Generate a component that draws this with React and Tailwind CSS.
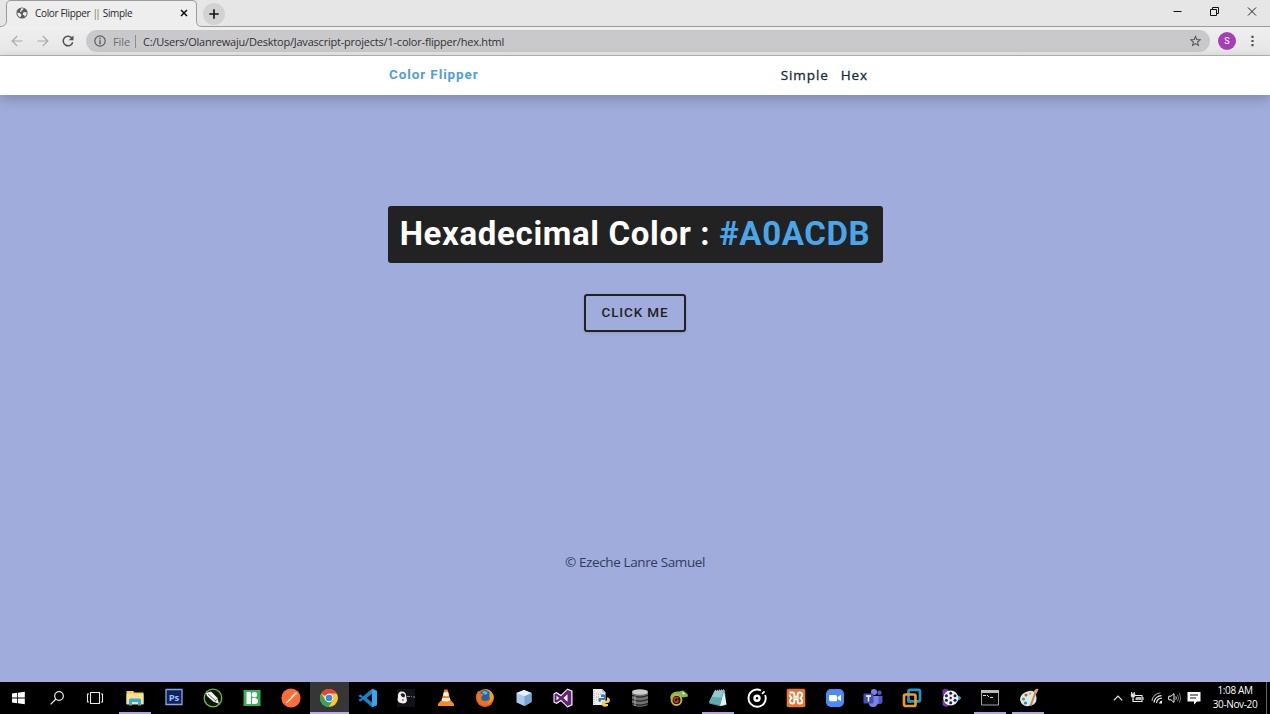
import React from "react";

const S = ({ children, w = 20, h = 20, className = "", vb }) => (
  <svg width={w} height={h} viewBox={vb || `0 0 ${w} ${h}`} fill="none" className={"block shrink-0 " + className}>
    {children}
  </svg>
);

function TabStrip() {
  return (
    <div className="flex h-[27px] shrink-0 items-stretch bg-[#e6e6e6]">
      <svg width="205" height="27" viewBox="0 0 205 27" fill="none" className="absolute left-0 top-0">
        <path d="M0 26.5C4 26.5 6.5 24.500 6.500 21V5Q6.500 0.500 11 0.500H192Q196.500 0.500 196.500 5V21Q196.500 26.500 202 26.500H205V27H0Z" fill="#eeeeee" />
        <path d="M0 26.500C4 26.500 6.500 24.500 6.500 21V5Q6.500 0.500 11 0.500H192Q196.500 0.500 196.500 5V21Q196.500 26.500 202 26.500H205" stroke="#9b9b9b" />
      </svg>
      <div className="relative flex w-[196px] items-center pb-px pl-4">
        <S w={12} h={12} vb="0 0 12 12">
          <circle cx="6" cy="6" r="5.600" fill="#58595c" />
          <path d="M1.300 5.600L3.600 5.900L5.200 7.300L5.400 8.500L4.600 9.300V10.600C2.500 9.900 1.300 8.200 1.300 5.600ZM5.200 1.300L7.600 1.400L7 3L5.600 3.600L5.200 5L3.900 4.700ZM7 5.800L8.400 5.100L10.800 5.600C10.700 7.700 9.700 9.200 8.600 9.800L8.200 8.200L6.800 7.700Z" fill="#eee" />
        </S>
        <span className="ml-[7px] flex whitespace-pre font-['Open_Sans',sans-serif] text-[10px] leading-none tracking-[-0.34px] text-[#27282b]">
          Color Flipper <span className="tracking-[-2.8px] text-[#77743f]">||</span><span className="ml-[2.600px]"> Simple</span>
        </span>
        <S w={8} h={8} className="ml-auto mr-2"><path d="M1 1L7 7M7 1L1 7" stroke="#111" strokeWidth="1.500" /></S>
      </div>
      <div className="relative ml-[7px] mt-[3px] flex h-[22px] w-[22px] items-center justify-center rounded-full bg-[#d2d2d2]">
        <S w={10} h={10}><path d="M5 0.300V9.700M0.300 5H9.700" stroke="#111" strokeWidth="1.600" /></S>
      </div>
      <div className="-ml-[20px] flex flex-1 justify-end border-b border-[#9b9b9b]">
        <div className="flex items-start gap-[28px] pr-[13px] pt-[6px]">
          <S w={9} h={11}><path d="M0.500 5.500H8.500" stroke="#111" /></S>
          <S w={9} h={11}><path d="M0.500 3.500H6.500V9.500H0.500ZM2.500 3.500V1.500H8.500V7.500H6.500" stroke="#111" /></S>
          <S w={10} h={11}><path d="M1 1.500L9 9.500M9 1.500L1 9.500" stroke="#222" /></S>
        </div>
      </div>
    </div>
  );
}

function Toolbar() {
  return (
    <div className="flex h-[29px] shrink-0 items-center border-b border-[#b4b4b4] bg-gradient-to-b from-[#efefef] to-[#e6e6e6] pl-[11px]">
      <S w={12} h={12}><path d="M11.500 6H1.500M6.200 1L1.200 6L6.200 11" stroke="#aaa" strokeWidth="1.200" /></S>
      <S w={12} h={12} className="ml-[14px]"><path d="M0.500 6H10.500M5.800 1L10.800 6L5.800 11" stroke="#aaa" strokeWidth="1.200" /></S>
      <S w={12} h={12} className="ml-[13px]">
        <path d="M10 3.300A4.800 4.800 0 1 0 10.700 7.200" stroke="#505256" strokeWidth="1.500" />
        <path d="M11.500 0.500V5.300H6.700Z" fill="#505256" />
      </S>
      <div className="ml-3 flex h-[22px] w-[1124px] items-center rounded-full bg-[#c9c9cb] pl-2 pr-[9px] font-['Open_Sans',sans-serif] text-[11px] leading-none">
        <S w={12} h={12}>
          <circle cx="6" cy="6" r="5.200" stroke="#5a5c60" strokeWidth="1.200" />
          <path d="M6 2.700V4.200M6 5.200V9.200" stroke="#505256" strokeWidth="1.300" />
        </S>
        <span className="ml-[7px] w-[17px] whitespace-nowrap tracking-[-0.1px] text-[#6a6c70]">File</span>
        <span className="ml-[5px] h-[13px] w-px bg-[#8b8c8f]" />
        <span className="ml-[7px] whitespace-nowrap tracking-[-0.21px] text-[#303134]">C:/Users/Olanrewaju/Desktop/Javascript-projects/1-color-flipper/hex.html</span>
        <S w={11} h={12} vb="0 0 12 12" className="ml-auto">
          <path d="M6 1L7.400 4.400L11.200 4.700L8.300 7.100L9.200 10.800L6 8.800L2.800 10.800L3.700 7.100L0.800 4.700L4.600 4.400Z" stroke="#505256" strokeWidth="1.100" />
        </S>
      </div>
      <div className="ml-2 flex h-[18px] w-[18px] items-center justify-center rounded-full bg-[#a63fb6] font-['Roboto',sans-serif] text-[9px] leading-none text-white">S</div>
      <S w={3} h={12} className="ml-[15px]"><path d="M0.400 0.800h2.200v2.200H0.400ZM0.400 4.900h2.200v2.200H0.400ZM0.400 9h2.200v2.200H0.400Z" fill="#505256" /></S>
    </div>
  );
}

const icons = [
  <S>
    <path d="M3 5.600L8.200 4.800V9.600H3ZM9 4.700L15.800 3.700V9.600H9ZM3 10.400H8.200V15.200L3 14.400ZM9 10.400H15.800V16.300L9 15.300Z" fill="#fff" />
  </S>,
  <S>
    <circle cx="12" cy="8" r="4.300" stroke="#eee" strokeWidth="1.200" /><path d="M9 11L3.500 16.400" stroke="#eee" strokeWidth="1.300" />
  </S>,
  <S className="-ml-[2px]">
    <path d="M5.500 4.500H14.500V15.500H5.500ZM4 6H2.500V14H4M16 6H17.500V14H16" stroke="#e8e8e8" strokeWidth="1.100" />
  </S>,
  <S className="-ml-[1px]">
    <path d="M1.500 3H8L9.500 4.500H18.500V16H1.500Z" fill="#f3cf68" /><path d="M1.500 6H18.500V16.500H1.500Z" fill="#fbe08c" />
    <path d="M4 17.500V12Q4 10.500 5.500 10.500H14.500Q16 10.500 16 12V17.500H13V14H7V17.500Z" fill="#31aee0" />
  </S>,
  <S className="-ml-[1px]">
    <path d="M2 1.500H18V16.500H2Z" fill="#12205e" stroke="#7fa9e8" strokeWidth="1.300" />
    <text x="10" y="12.800" textAnchor="middle" fontFamily="Open Sans, sans-serif" fontWeight="700" fontSize="9.500" fill="#9cc7fb">Ps</text>
  </S>,
  <S>
    <circle cx="10" cy="10" r="8.800" fill="#0c1608" stroke="#75b83a" strokeWidth="1.300" />
    <path d="M3 5L8 3.500L14.500 10L16 15.700L10.500 13.800L4 8Z" fill="#f2f2f2" /><path d="M5 6L13 13M12 13.500L14.700 10.700" stroke="#444" strokeWidth="0.800" />
  </S>,
  <S>
    <path d="M1.500 2H18.500V18H1.500Z" fill="#35b354" /><path d="M4.500 4H9V16H4.500Z" fill="#fff" />
    <circle cx="12.400" cy="6.800" r="2.700" fill="#fff" /><path d="M10 10H13Q16 10.500 16 13.200T13 16H10Z" fill="#fff" />
  </S>,
  <S>
    <circle cx="10" cy="10" r="9.600" fill="#ff6c37" /><path d="M4.500 15L10.500 9L11.500 10L6 15Z" fill="#fff" /><path d="M10.500 9.800L14.200 5.800" stroke="#fff" strokeWidth="1.500" /><circle cx="14.500" cy="5.500" r="1.300" fill="#ffd5c5" />
  </S>,
  <S>
    <circle cx="10" cy="10" r="9" fill="#fbc92e" />
    <path d="M10 10L2.200 5.500A9 9 0 0 1 17.800 5.500H10Z" fill="#e54335" />
    <path d="M2.200 5.500A9 9 0 0 0 9.800 19L13.700 12L10 14L6.200 12.200Z" fill="#34a353" />
    <circle cx="10" cy="10" r="4.200" fill="#fff" /><circle cx="10" cy="10" r="3.300" fill="#4384f0" />
  </S>,
  <S>
    <path d="M14 0.700L19 3V17L14 19.300L5 11.500L2.500 13.500L0.800 12.600V11.500L4 10L0.800 8.500V7.400L2.500 6.500L5 8.500ZM14 5.700L8.500 10L14 14.300Z" fill="#1585cf" fillRule="evenodd" />
    <path d="M14 0.700L19 3V17L14 19.300Z" fill="#36a6ed" />
  </S>,
  <S className="-ml-[2px]">
    <path d="M1 1H19V19H1Z" fill="#101218" /><path d="M2 9Q1.500 4 5 3.500Q9.500 3 10 7L11 13Q10 15.500 7 15.500Q2 15 1.500 12Z" fill="#eee" />
    <path d="M4.500 6.500Q7 4 9 7L8.300 9.500L6 8.800Z" fill="#16181c" /><circle cx="7" cy="12" r="0.900" fill="#c44" /><path d="M11 8.500H14M15 8.700H16M17 9H19" stroke="#888" />
  </S>,
  <S>
    <path d="M4.500 13H15.500L18 16V18H2V16Z" fill="#f68b1e" /><path d="M8.500 1.500H11.500L15 14Q10 17 5 14Z" fill="#f58a1c" />
    <path d="M7.900 4.200H12.200L13 7.500Q10 8.800 7 7.500ZM6.300 10L13.800 10L14.500 12.500Q10 14.700 5.500 12.500Z" fill="#f2eee8" />
  </S>,
  <S>
    <circle cx="10" cy="10" r="9" fill="#e8661b" /><circle cx="10.500" cy="8.500" r="6.500" fill="#1c65a8" />
    <path d="M10 1C15 1 18.500 5 18.500 10Q16 16 11 16Q14 14 15 11Q14 8 14.500 4Z" fill="#f59d26" />
    <path d="M1.300 7Q2.500 3 4.500 3L5 5.500Q7 5 8.500 6.500L6.500 8.500Q5.500 12.500 9.500 13Q13 13 15 11Q14 16.500 9 17.500Q2 16 1.300 7Z" fill="#ee7121" /><path d="M7 4Q10 1.500 13 5L10 7Z" fill="#54b8df" />
  </S>,
  <S>
    <path d="M10 2L17.500 5V14L10.500 18L2.500 14.500V5Z" fill="#a9caee" /><path d="M10 2L17.500 5L10.500 8.300L2.500 5Z" fill="#e4f2ff" /><path d="M10.500 8.300L17.500 5V14L10.500 18Z" fill="#7ba4d2" />
  </S>,
  <S>
    <path d="M14.500 0.500L19.500 2.800V17.200L14.500 19.500L8 13.200L3.500 16L0.500 14.500V5.500L3.500 4L8 6.800Z" fill="#fff" />
    <path d="M14.500 1.800L18.300 3.500V16.500L14.500 18.200L8 11.800L3.200 14.700L1.500 13.800V6.200L3.200 5.300L8 8.200ZM14.500 6.200L10.500 10L14.500 13.800ZM3.500 7.800V12.200L6.200 10Z" fill="#68217a" fillRule="evenodd" />
  </S>,
  <S>
    <path d="M2 1H11L14.500 4.500V17H2Z" fill="#ececec" /><path d="M11 1V4.500H14.500" fill="#bbb" /><path d="M3 3V16M5 6H10M5 9H8M5 12H8" stroke="#aaa" strokeDasharray="1 1" />
    <path d="M10 6.500Q14 5.500 15 8V11Q15 12 13.500 12H10.500Q9.500 12 9.500 14H8Q7 12 8 10H13V9H10Z" fill="#3c78a9" /><path d="M16 9.500Q19 9 19 13Q18.500 15 16 15H14V16H17V18Q12 20 11 17V14Q11 13 12.500 13H15Q16 13 16 11Z" fill="#f7ce48" />
  </S>,
  <S>
    <path d="M2 4.500V16Q3.500 18.700 10 18.700T18 16V4.500Z" fill="#727272" /><ellipse cx="10" cy="4" rx="8" ry="2.700" fill="#ccc" />
    <path d="M2 7.300Q10 10.800 18 7.300M2 11.300Q10 14.800 18 11.300M2 15.300Q10 18.800 18 15.300" stroke="#252525" strokeWidth="1.300" /><path d="M5 8V18" stroke="#aaa" strokeWidth="2" opacity=".5" />
  </S>,
  <S>
    <path d="M1 10Q2 2.500 10 3.500L14 2.500L18.500 6L19 8.500L14 9.500L11 8.500Q6 6 4 10L3 11.500Z" fill="#82b958" /><circle cx="7.500" cy="12" r="4.900" stroke="#c2b52e" strokeWidth="2" />
    <path d="M9.500 10Q6 8.500 5 11.500Q5.500 15 8.500 14Q10 12.500 8 11.800" stroke="#d43b20" strokeWidth="1.700" /><circle cx="14.500" cy="5.300" r="1.100" fill="#e6f0c9" />
  </S>,
  <S>
    <path d="M6.500 3L17 2L18 17L12 18.300L1 15.500Z" fill="#4a97a3" /><path d="M6.500 3L15.500 2.300L11.500 16.500L1 14Z" fill="#8fc9cf" /><path d="M4 9L13.500 9.500L11.500 16.500L1 14Z" fill="#5fa9b3" /><path d="M16 3L18.500 16.500L12 18Z" fill="#e4f3f2" /><path d="M7 2.500L16 1.800" stroke="#ddd" strokeDasharray="1 1" />
  </S>,
  <S>
    <path d="M14 2.500A8.600 8.600 0 1 0 18.100 7" stroke="#fff" strokeWidth="1.900" /><path d="M15 5.800L17.500 3.300" stroke="#fff" strokeWidth="1.800" /><circle cx="10" cy="10.200" r="2.500" stroke="#fff" strokeWidth="2.400" />
  </S>,
  <S>
    <rect x="0.700" y="0.700" width="18.600" height="18.600" rx="2" fill="#e97732" />
    <path d="M3.500 4.500H6.500Q8.300 4.500 8.300 6.300V8.700H11.700V6.300Q11.700 4.500 13.700 4.500T16.200 6.500Q16.200 8.500 14.500 10Q16.200 11.500 16.200 13.500T13.700 15.500Q11.700 15.500 11.700 13.700V11.300H8.300V13.700Q8.300 15.500 6.300 15.500T3.800 13.500Q3.800 11.500 5.500 10Q3.800 8.500 3.500 6.500" stroke="#fff" strokeWidth="1.900" />
  </S>,
  <S>
    <rect x="1" y="1" width="18" height="18" rx="5" fill="#4a8cf7" /><path d="M4 7H10.500Q12 7 12 8.500V13.200H5.500Q4 13.200 4 11.500ZM12.700 9L16 6.800V13.300L12.700 11Z" fill="#fff" />
  </S>,
  <S>
    <circle cx="11" cy="4" r="3" fill="#7b83eb" /><circle cx="16.500" cy="4.700" r="2.200" fill="#5059c9" /><path d="M13 8H19.500V14Q18 17 14.500 16Z" fill="#5059c9" /><path d="M6 8H15.500V14Q14 19 10 19T6 15Z" fill="#7b83eb" />
    <rect x="0.500" y="5.500" width="10" height="10" rx="1" fill="#464eb8" /><path d="M3 8H8M5.500 8V13.500" stroke="#fff" strokeWidth="1.400" />
  </S>,
  <S>
    <rect x="6.500" y="1.800" width="11.500" height="11.500" rx="1.500" stroke="#2098cf" strokeWidth="2.700" /><rect x="2" y="6.500" width="11.500" height="11.500" rx="1.500" stroke="#f19a1c" strokeWidth="2.700" /><path d="M6.500 10V13.300H10" stroke="#2098cf" strokeWidth="2.500" />
  </S>,
  <S>
    <path d="M6 2L19 8.500Q21 10 19 11.500L6 18Z" fill="#27a7c9" /><path d="M1.500 8V2Q4 0 8 2ZM1.500 12V17Q4 20 8 18Z" fill="#7536b5" />
    <circle cx="9.700" cy="10" r="7.600" fill="#efeff6" /><g fill="#22243b"><circle cx="9.700" cy="5.300" r="1.500" /><circle cx="14" cy="7.700" r="1.500" /><circle cx="14" cy="12.300" r="1.500" /><circle cx="9.700" cy="14.700" r="1.500" /><circle cx="5.400" cy="12.300" r="1.500" /><circle cx="5.400" cy="7.700" r="1.500" /><circle cx="9.700" cy="10" r="1.200" /></g>
  </S>,
  <S>
    <path d="M1.500 2.500H18.500V17H1.500Z" fill="#080808" stroke="#a5a5a5" /><path d="M1 2H19V5H1Z" fill="#bbb" /><path d="M3 7.500H6M7 7L9 9M10 9.500H13" stroke="#ddd" />
  </S>,
  <S>
    <path d="M10 3Q1 5 1 12Q3 19 10 18Q12 16 14 17Q19 14 17 7Q15 2 10 3Z" fill="#d8eaf1" /><circle cx="4.500" cy="11" r="1.500" fill="#42a743" /><circle cx="7" cy="7" r="1.500" fill="#d84a3b" /><circle cx="6.500" cy="15" r="1.600" fill="#397bc8" /><circle cx="11" cy="5.500" r="1.300" fill="#e4ae2b" />
    <path d="M17 3L11.500 18" stroke="#ca8542" strokeWidth="2" /><path d="M14.500 4.500Q16 0 19.500 1Q19 3 17.500 5.500Z" fill="#d9a45d" />
  </S>,
];

const running = [3, 18, 25, 26];

function Taskbar() {
  return (
    <div className="flex h-8 shrink-0 items-stretch bg-black">
      {icons.map((icon, i) => (
        <div
          key={i}
          className={
            "relative flex shrink-0 items-center justify-center " +
            (i === 0 ? "w-[38px] " : "w-[38.86px] ") +
            (i === 8 ? "border-b-2 border-[#bda9e6] bg-[#363636] pt-[2px]" : "")
          }
        >
          {icon}
          {running.includes(i) && <span className="absolute bottom-0 left-[3px] h-[2px] w-[32px] bg-[#b5a2dc]" />}
        </div>
      ))}
      <div className="ml-auto flex items-center">
        <S w={10} h={8}><path d="M0.800 6.300L5 2L9.200 6.300" stroke="#eee" strokeWidth="1.200" /></S>
        <S w={14} h={12} className="ml-[7px]">
          <path d="M5 3.500H12V9.500H3V7" stroke="#eee" strokeWidth="1.100" /><path d="M6.500 5H11V8H5.500V6Z" fill="#bbb" /><path d="M12.500 5H13.500V8H12.500" fill="#eee" /><path d="M0.800 1.500H5.200V4Q5 5.500 3 5.500T0.800 4Z" fill="#ddd" /><path d="M3 5V8M1.700 0V2M4.200 0V2" stroke="#eee" />
        </S>
        <S w={12} h={12} className="ml-[7px]">
          <path d="M1 9A8.500 8.500 0 0 1 9.500 1" stroke="#999" strokeWidth="1.100" /><path d="M3 10.500A7.500 7.500 0 0 1 10.500 3.700M5.500 11A5.500 5.500 0 0 1 10.800 6.200" stroke="#eee" strokeWidth="1.200" /><path d="M8 11.500A3.500 3.500 0 0 1 11 8.500V11.500Z" fill="#eee" />
        </S>
        <S w={14} h={12} className="ml-[5px]">
          <path d="M0.700 4.200H3L6 1.500V10.500L3 7.800H0.700Z" stroke="#eee" /><path d="M7.800 4.300Q8.800 6 7.800 7.700" stroke="#ddd" /><path d="M9.500 2.700Q11.500 6 9.500 9.300M11.400 1.300Q14 6 11.400 10.700" stroke="#777" />
        </S>
        <S w={14} h={14} className="ml-[5px]">
          <path d="M0.500 1H13.500V10.500H10L7 13.500V10.500H0.500Z" fill="#fff" /><path d="M3 4H11M3 7H9" stroke="#111" strokeWidth="1.200" />
        </S>
        <div className="ml-[10px] flex w-[48px] flex-col items-center whitespace-nowrap pb-[2px] font-['Open_Sans',sans-serif] text-[10px] leading-[14px] tracking-[-0.35px] text-white">
          <span>1:08 AM</span>
          <span>30-Nov-20</span>
        </div>
        <div className="ml-[7px] h-8 w-px bg-[#666]" />
        <div className="w-[3px]" />
      </div>
    </div>
  );
}

export default function App() {
  return (
    <div className="relative flex h-[714px] w-[1270px] flex-col overflow-hidden bg-[#a0acdb]">
      <TabStrip />
      <Toolbar />
      <nav className="relative flex h-[38.5px] shrink-0 items-center justify-between bg-white pb-px pl-[389px] pr-[402px] shadow-[0_4px_12px_rgba(0,0,0,0.22)]">
        <h4 className="whitespace-nowrap font-['Roboto',sans-serif] text-[13.5px] font-bold leading-none tracking-[0.9px] text-[#4f9edb]">Color Flipper</h4>
        <div className="flex gap-[12px] pt-px font-['Open_Sans',sans-serif] text-[13.5px] font-medium leading-none tracking-[0.9px] text-[#102a42] [-webkit-text-stroke:0.3px_#102a42]">
          <a>Simple</a>
          <a>Hex</a>
        </div>
      </nav>
      <main className="flex flex-1 flex-col items-center pt-[111.5px]">
        <h2 className="flex h-[57px] w-[495px] items-center justify-center whitespace-pre rounded-[3px] bg-[#222] pb-[2px] font-['Roboto',sans-serif] text-[33px] font-bold leading-none tracking-[0.65px] text-white">
          Hexadecimal Color : <span className="text-[#49a6e9]">#A0ACDB</span>
        </h2>
        <button className="mt-[31px] flex h-[38px] w-[102px] items-center justify-center rounded-[3px] border-2 border-[#222] pb-px font-['Roboto',sans-serif] text-[13.5px] font-medium leading-none tracking-[0.85px] text-[#222] shadow-[0_1px_3px_rgba(0,0,0,0.12)]">
          CLICK ME
        </button>
        <p className="mt-[222px] whitespace-nowrap font-['Open_Sans',sans-serif] text-[13.5px] leading-4 tracking-[-0.38px] text-[#303c5c]">© Ezeche Lanre Samuel</p>
      </main>
      <Taskbar />
    </div>
  );
}
